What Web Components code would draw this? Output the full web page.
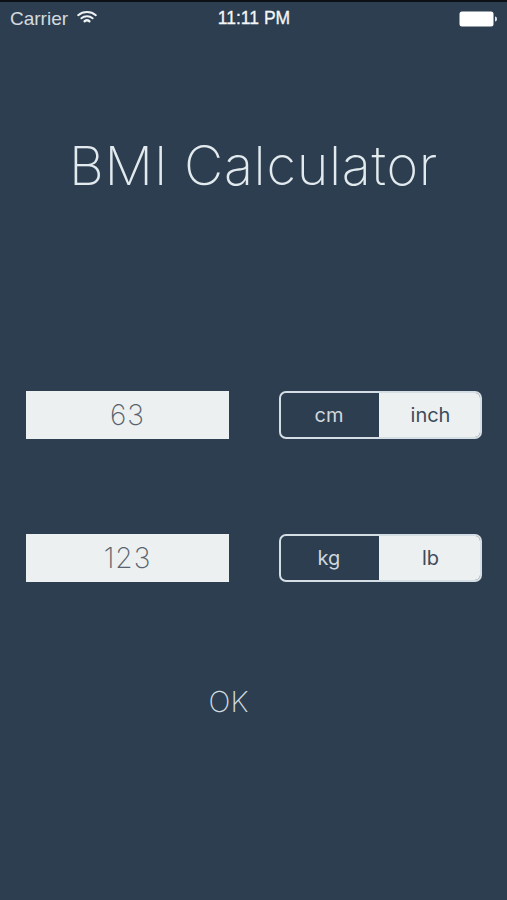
<!DOCTYPE html>
<html>
<head>
<meta charset="utf-8">
<title>BMI Calculator</title>
<style>
    html, body { margin: 0; height: 100%; background: #2c3e50; }
</style>
</head>
<body>
<bmi-app></bmi-app>
<script>
class StatusBar extends HTMLElement {
    constructor() {
        super();
        this.attachShadow({ mode: "open" });
        this.shadowRoot.innerHTML = `
            <style>
                :host {
                    display: grid;
                    grid-template-columns: 1fr auto 1fr;
                    align-items: center;
                    height: 33px;
                    padding: 0 9px 2px 10px;
                    border-top: 2px solid #0c1116;
                    color: #e6ebee;
                    font: 17.5px "Liberation Sans", Arial, sans-serif;
                }
                .left { display: flex; align-items: center; gap: 9px; }
                .left span { font-size: 19px; opacity: .9; }
                .time { color: #f4f6f7; -webkit-text-stroke: .3px #f4f6f7; }
                .right { display: flex; justify-content: flex-end; }
                svg { display: block; }
            </style>
            <div class="left">
                <span>Carrier</span>
                <svg width="20" height="15" viewBox="0 0 20 15" fill="none" stroke="#eef1f3" stroke-linecap="round" style="margin-top:-3px">
                    <path d="M1.2 5.2C6 .9 14 .9 18.800 5.200" stroke-width="2"/>
                    <path d="M4.4 8.3C7.400 5.700 12.600 5.700 15.600 8.300" stroke-width="2"/>
                    <path d="M7.600 11.200C9 10.200 11 10.200 12.400 11.200" stroke-width="2.400"/>
                </svg>
            </div>
            <span class="time">11:11 PM</span>
            <div class="right">
                <svg width="39" height="16" viewBox="0 0 39 16">
                    <rect x="0.5" y="0.5" width="34" height="15" rx="2.5" fill="#fff"/>
                    <path d="M36 5.5c1.4 0 2 1 2 2.500s-.6 2.500-2 2.500z" fill="#dfe4e8"/>
                </svg>
            </div>
        `;
    }
}

class NumberField extends HTMLElement {
    constructor() {
        super();
        this.attachShadow({ mode: "open" });
        this.shadowRoot.innerHTML = `
            <style>
                :host {
                    display: flex;
                    align-items: center;
                    justify-content: center;
                    height: 48px;
                    background: #ecf0f1;
                    color: #59636d;
                    font: 200 28px Inter, Lato, sans-serif;
                    letter-spacing: 1px;
                }
            </style>
            <slot></slot>
        `;
    }
}

class UnitToggle extends HTMLElement {
    constructor() {
        super();
        this.attachShadow({ mode: "open" });
        this.shadowRoot.innerHTML = `
            <style>
                :host {
                    display: grid;
                    grid-template-columns: 98px 1fr;
                    box-sizing: border-box;
                    height: 48px;
                    border: 2px solid #d5dee4;
                    border-radius: 7px;
                    overflow: hidden;
                    font: 20px Inter, "Liberation Sans", sans-serif;
                }
                span { display: flex; align-items: center; justify-content: center; padding-bottom: 1px; }
                .on { color: #cfd8de; padding-right: 2px; }
                .off { background: #ecf0f1; color: #3e4c5a; padding-left: 2px; }
            </style>
            <span class="on">${this.getAttribute("first")}</span>
            <span class="off">${this.getAttribute("second")}</span>
        `;
    }
}

class BmiApp extends HTMLElement {
    constructor() {
        super();
        this.attachShadow({ mode: "open" });
        this.shadowRoot.innerHTML = `
            <style>
                :host {
                    display: block;
                    height: 900px;
                    overflow: hidden;
                    background: #2c3e50;
                }
                h1 {
                    margin: 91px 0 0;
                    height: 76px;
                    text-align: center;
                    color: #e2eaee;
                    font: 200 54px/76px Inter, Lato, sans-serif;
                    letter-spacing: .7px;
                }
                .rows {
                    display: grid;
                    grid-template-columns: 203px 203px;
                    column-gap: 50px;
                    row-gap: 95px;
                    padding: 0 25px 0 26px;
                    margin-top: 187px;
                }
                .ok {
                    width: 203px;
                    margin: 100px 0 0 127px;
                    text-align: center;
                    color: #cfd9df;
                    font: 200 29px/40px Inter, Lato, sans-serif;
                }
            </style>
            <status-bar></status-bar>
            <h1>BMI Calculator</h1>
            <div class="rows">
                <number-field>63</number-field>
                <unit-toggle first="cm" second="inch"></unit-toggle>
                <number-field>123</number-field>
                <unit-toggle first="kg" second="lb"></unit-toggle>
            </div>
            <div class="ok">OK</div>
        `;
    }
}

customElements.define("status-bar", StatusBar);
customElements.define("number-field", NumberField);
customElements.define("unit-toggle", UnitToggle);
customElements.define("bmi-app", BmiApp);
</script>
</body>
</html>
